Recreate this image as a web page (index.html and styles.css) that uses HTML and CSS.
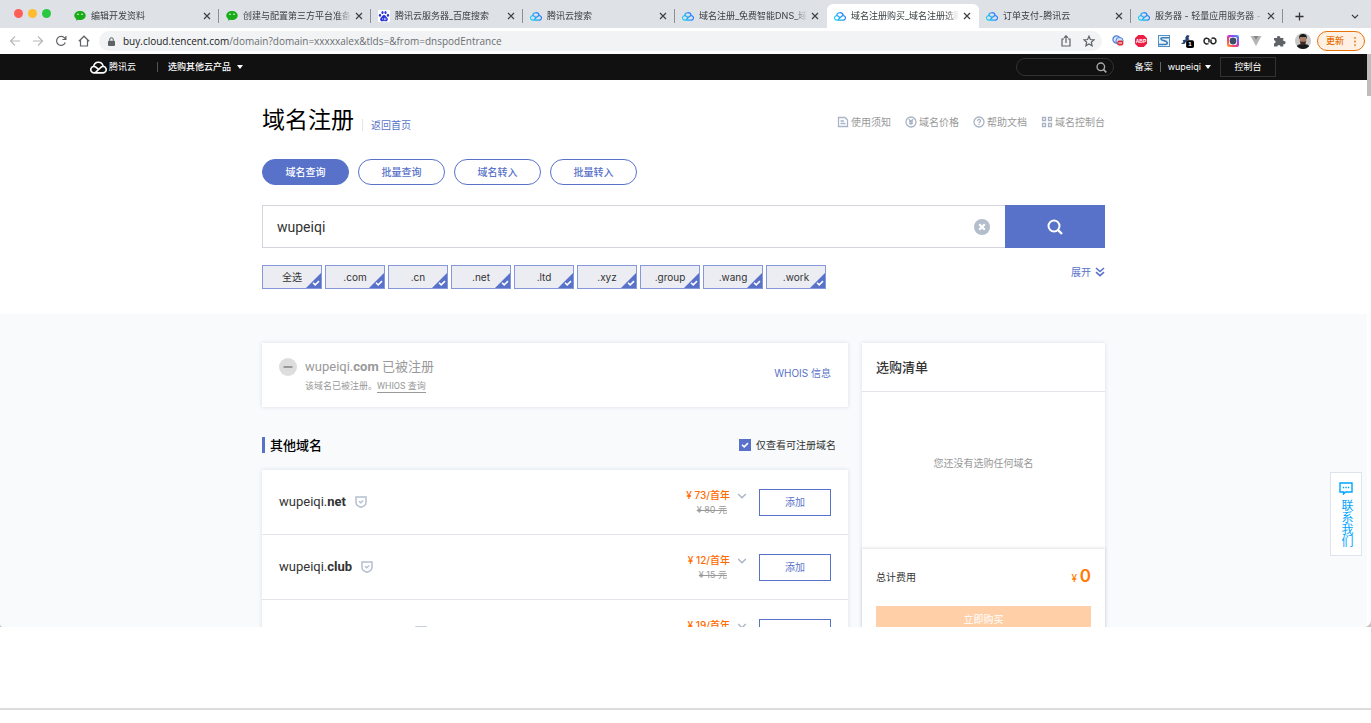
FILE: index.html
```html
<!DOCTYPE html>
<html lang="zh-CN">
<head>
<meta charset="utf-8">
<title>域名注册购买</title>
<link rel="stylesheet" href="styles.css">
</head>
<body>
<svg class="defs" aria-hidden="true">
  <defs>
    <linearGradient id="sky" gradientUnits="userSpaceOnUse" x1="1" y1="11" x2="14" y2="2"><stop offset="0" stop-color="#16d8ec"/><stop offset=".5" stop-color="#1f9bff"/><stop offset="1" stop-color="#1a6dff"/></linearGradient>
  </defs>
  <symbol id="cloud" viewBox="0 0 16 13"><path d="M3.800 12H12.200a3 3 0 1 0-2-5.200L5.600 11.200Q4.800 12 3.800 12A3 3 0 1 1 5.800 6.800L8 8.800M3.500 5.800A4.500 4.500 0 0 1 12.300 5.500" fill="none" stroke-width="1.500"/></symbol>
  <symbol id="wechat" viewBox="0 0 12 12"><path d="M6 1C2.800 1 .3 3 .3 5.500c0 1.500.8 2.700 2 3.500L2 10.700l2-1c.6.200 1.300.3 2 .3 3.200 0 5.700-2 5.700-4.500S9.200 1 6 1z" fill="#1aad19"/><g fill="#fff"><circle cx="4" cy="4.300" r=".8"/><circle cx="8" cy="4.300" r=".8"/></g></symbol>
  <symbol id="shield" viewBox="0 0 12 12"><path d="M1 1h10v5.500c0 2.500-2 3.900-5 4.700C3 10.400 1 9 1 6.500z" fill="none" stroke="#b4bfd0" stroke-width="1.500"/><path d="M4 5.300l1.600 1.500L8.200 4.400" fill="none" stroke="#b4bfd0" stroke-width="1.400"/></symbol>
  <symbol id="chevron" viewBox="0 0 10 6"><path d="M1.200 1l3.800 3.800L8.800 1" fill="none" stroke="currentColor" stroke-width="1.400"/></symbol>
  <symbol id="cross" viewBox="0 0 8 8"><path d="M1 1l6 6M7 1l-6 6" stroke="currentColor" stroke-width="1.200"/></symbol>
  <symbol id="lens" viewBox="0 0 16 16"><circle cx="7" cy="7" r="5.500" fill="none" stroke="currentColor" stroke-width="2"/><path d="M11 11l4 4" stroke="currentColor" stroke-width="2.400"/></symbol>
  <symbol id="tick" viewBox="0 0 8 6"><path d="M1 2.800L3.200 4.900 7 1.100" fill="none" stroke="#fff" stroke-width="1.500"/></symbol>
</svg>

<div class="browser">
  <div class="tabstrip">
    <div class="lights"><i class="light red"></i><i class="light amber"></i><i class="light green"></i></div>
    <div class="tab"><svg class="fav"><use href="#wechat"/></svg><span class="tab-title">编辑开发资料</span><button class="close" aria-label="关闭"><svg><use href="#cross"/></svg></button></div>
    <div class="tab"><svg class="fav"><use href="#wechat"/></svg><span class="tab-title">创建与配置第三方平台准备工</span><button class="close" aria-label="关闭"><svg><use href="#cross"/></svg></button></div>
    <div class="tab"><svg class="fav" viewBox="0 0 12 12"><rect width="12" height="12" rx="1" fill="#fff"/><g fill="#2932e1"><ellipse cx="2" cy="5.300" rx="1.100" ry="1.500"/><ellipse cx="4.500" cy="2.500" rx="1.100" ry="1.500"/><ellipse cx="7.500" cy="2.500" rx="1.100" ry="1.500"/><ellipse cx="10" cy="5.300" rx="1.100" ry="1.500"/><path d="M6 5c-1.500 0-1.700 1.400-2.700 2.200-1.700 1.400-1.500 4 .7 4 1 0 1.200-.3 2-.3s1 .3 2 .3c2.200 0 2.400-2.600.7-4C7.700 6.400 7.500 5 6 5z"/></g><path d="M4.700 8v1.800M6.500 7.800v2h1.300v-2" stroke="#fff" stroke-width=".6" fill="none"/></svg><span class="tab-title">腾讯云服务器_百度搜索</span><button class="close" aria-label="关闭"><svg><use href="#cross"/></svg></button></div>
    <div class="tab"><svg class="fav sky"><use href="#cloud"/></svg><span class="tab-title">腾讯云搜索</span><button class="close" aria-label="关闭"><svg><use href="#cross"/></svg></button></div>
    <div class="tab bare"><svg class="fav sky"><use href="#cloud"/></svg><span class="tab-title">域名注册_免费智能DNS_域</span><button class="close" aria-label="关闭"><svg><use href="#cross"/></svg></button></div>
    <div class="tab active bare"><svg class="fav sky"><use href="#cloud"/></svg><span class="tab-title">域名注册购买_域名注册选购</span><button class="close" aria-label="关闭"><svg><use href="#cross"/></svg></button></div>
    <div class="tab"><svg class="fav sky"><use href="#cloud"/></svg><span class="tab-title">订单支付-腾讯云</span><button class="close" aria-label="关闭"><svg><use href="#cross"/></svg></button></div>
    <div class="tab"><svg class="fav sky"><use href="#cloud"/></svg><span class="tab-title">服务器 - 轻量应用服务器 - 控</span><button class="close" aria-label="关闭"><svg><use href="#cross"/></svg></button></div>
    <button class="newtab" aria-label="新标签页"><svg viewBox="0 0 10 10"><path d="M5 .5v9M.5 5h9" stroke="#333" stroke-width="1.400"/></svg></button>
    <button class="tabmenu" aria-label="搜索标签页"><svg><use href="#chevron"/></svg></button>
  </div>

  <div class="toolbar">
    <div class="nav-icons">
      <svg viewBox="0 0 12 12" class="dim"><path d="M11 6H1.500M6 1.500L1.500 6 6 10.500"/></svg>
      <svg viewBox="0 0 12 12" class="dim"><path d="M1 6h9.500M6 1.500L10.500 6 6 10.500"/></svg>
      <svg viewBox="0 0 12 12"><path d="M10.300 7.500A4.500 4.500 0 1 1 9.600 3L10.800 4.200M10.900 1v3.500H7.400"/></svg>
      <svg viewBox="0 0 12 12"><path d="M.8 6.200L6 1.200l5.200 5M2.500 5v6h7V5"/></svg>
    </div>
    <div class="address">
      <svg class="lock" viewBox="0 0 8 10"><rect y="4" width="8" height="6" rx="1" fill="#5f6368"/><path d="M2 4V2.800a2 2 0 0 1 4 0V4" fill="none" stroke="#5f6368" stroke-width="1.200"/></svg>
      <span class="url"><b>buy.cloud.tencent.com</b>/domain?domain=xxxxxalex&amp;tlds=&amp;from=dnspodEntrance</span>
      <svg class="addr-icon" viewBox="0 0 12 12"><path d="M4 4H2v7h8V4H8M6 8V1M4 2.800L6 .8l2 2"/></svg>
      <svg class="addr-icon" viewBox="0 0 12 12"><path d="M6 1.200l1.400 3.300 3.600.3-2.700 2.400.8 3.500L6 8.900l-3.100 1.800.8-3.500L1 4.800l3.600-.3z"/></svg>
    </div>
    <div class="exts">
      <svg viewBox="0 0 14 14"><circle cx="5.500" cy="5.500" r="3.600" fill="#dbe7fb" stroke="#4a7ddb" stroke-width="1.200"/><circle cx="8.500" cy="7" r="3.600" fill="#cfe0fa" stroke="#4a7ddb"/><rect x="6.300" y="6.500" width="6" height="5" rx="2" fill="#e5262b"/><path d="M7.500 9h3.600" stroke="#fff"/></svg>
      <svg viewBox="0 0 14 14"><path d="M4.300 1h5.400L13 4.300v5.400L9.700 13H4.300L1 9.700V4.300z" fill="#ed1e45"/><text x="7" y="9" class="abp">ABP</text></svg>
      <svg viewBox="0 0 14 14"><rect x="1.500" y="1.500" width="11" height="11" fill="#eaf3fb" stroke="#5590c4"/><path d="M12 3.800H5.500Q3.800 3.800 4 5.100 4.200 6.200 7 6.600T10.300 8.800Q10.300 10.500 8 10.500H2" fill="none" stroke="#3f7fb8" stroke-width="1.600"/></svg>
      <svg viewBox="0 0 16 16"><path d="M8 1l3 1-1.500 2.500L11 6 8 7.500 5 11.500 1 11l3-2-1-1.800 3.500-1L6 4z" fill="#25406f"/><rect x="7" y="7" width="9" height="9" rx="2" fill="#000"/><text x="11.500" y="14" class="badge">1</text></svg>
      <svg viewBox="0 0 14 14"><path d="M8.500 4.500C10 3.500 13 4 13 7s-3.500 3.600-5 1.500V5.500M5.500 9.500C4 10.500 1 10 1 7s3.500-3.600 5-1.500v3" fill="none" stroke="#222" stroke-width="1.500"/></svg>
      <svg viewBox="0 0 14 14"><defs><linearGradient id="cam" x1="0" y1="1" x2="1" y2="0"><stop offset="0" stop-color="#ffb02f"/><stop offset=".3" stop-color="#ff4b5b"/><stop offset=".65" stop-color="#a13cf0"/><stop offset="1" stop-color="#2fa8ff"/></linearGradient></defs><rect x="1" y="1" width="12" height="12" rx="2" fill="url(#cam)"/><rect x="3" y="3" width="8" height="8" rx="2" fill="#fff"/><circle cx="7" cy="7" r="3.400" fill="#3c5063"/></svg>
      <svg viewBox="0 0 14 14"><path d="M1.500 2h3.300L7 6l2.200-4h3.300L7 12z" fill="#b5b5b5"/><path d="M4.500 2L7 6.200 9.500 2z" fill="#858585"/></svg>
      <svg viewBox="0 0 14 14"><path d="M2 4h3a1.700 1.700 0 1 1 3.300 0h3v3a1.700 1.700 0 1 1 0 3.200v2.300H8.500a1.600 1.600 0 0 0-3.200 0H2V9.400a1.600 1.600 0 0 0 0-3.200z" fill="#5f6368"/></svg>
      <svg class="avatar" viewBox="0 0 16 16"><clipPath id="round"><circle cx="8" cy="8" r="8"/></clipPath><g clip-path="url(#round)"><rect width="16" height="16" fill="#c9c8c6"/><path d="M1 16c0-4 3-5 7-5s7 1 7 5z" fill="#17191d"/><ellipse cx="8" cy="6.800" rx="3.300" ry="4.500" fill="#a97c66"/><path d="M4 6.500C3.500 2 6 1 8 1s4.500 1 4 5.500L11 4H5z" fill="#1b1a1a"/><path d="M5 8.300q3 1 6 0L10.400 11 8 12.300 5.600 11z" fill="#3a2b27"/></g></svg>
      <button class="update">更新<svg viewBox="0 0 2 10"><g fill="#e8710a"><circle cx="1" cy="1" r="1"/><circle cx="1" cy="5" r="1"/><circle cx="1" cy="9" r="1"/></g></svg></button>
    </div>
  </div>

  <div class="viewport">
    <div class="page">
      <nav class="topnav">
        <a class="logo" href="#"><svg><use href="#cloud"/></svg>腾讯云</a>
        <i class="rule"></i>
        <a class="products" href="#">选购其他云产品<i class="caret"></i></a>
        <div class="navsearch"><input type="text" aria-label="搜索"><svg><use href="#lens"/></svg></div>
        <a class="beian" href="#">备案</a>
        <a class="user" href="#">wupeiqi<i class="caret"></i></a>
        <a class="console" href="#">控制台</a>
      </nav>

      <section class="hero">
        <div class="wrap">
          <div class="title-row">
            <h1>域名注册</h1>
            <a class="back" href="#">返回首页</a>
            <div class="quick">
              <a href="#"><svg viewBox="0 0 12 12"><path d="M1.500 1.500h6.500l2.500 2.500v6.500h-9zM3.500 5h3.500M3.500 7.500h5"/></svg>使用须知</a>
              <a href="#"><svg viewBox="0 0 12 12"><circle cx="6" cy="6" r="5"/><path d="M4 3.300l2 2.200 2-2.200M6 5.500V9M4 5.700h4M4 7.400h4"/></svg>域名价格</a>
              <a href="#"><svg viewBox="0 0 12 12"><circle cx="6" cy="6" r="5"/><path d="M4.500 5a1.500 1.500 0 1 1 2.300 1.200Q6 6.600 6 7.200M6 8v1"/></svg>帮助文档</a>
              <a href="#"><svg viewBox="0 0 12 12"><path d="M1.500 1.500h3v3h-3zM7.500 1.500h3v3h-3zM1.500 7.500h3v3h-3zM7.500 7.500h3v3h-3z"/></svg>域名控制台</a>
            </div>
          </div>

          <div class="pills">
            <button class="pill on">域名查询</button><button class="pill">批量查询</button><button class="pill">域名转入</button><button class="pill">批量转入</button>
          </div>

          <form class="search">
            <input type="text" value="wupeiqi" aria-label="域名">
            <button type="button" class="clear" aria-label="清除"><svg viewBox="0 0 16 16"><circle cx="8" cy="8" r="8" fill="#b4bdcc"/><path d="M5.200 5.200l5.600 5.600M10.800 5.200l-5.600 5.600" stroke="#fff" stroke-width="2.200"/></svg></button>
            <button type="button" class="go" aria-label="查询"><svg><use href="#lens"/></svg></button>
          </form>

          <div class="suffix-row">
            <div class="chips">
              <label class="chip"><input type="checkbox" checked>全选<svg class="tick"><use href="#tick"/></svg></label>
              <label class="chip"><input type="checkbox" checked>.com<svg class="tick"><use href="#tick"/></svg></label>
              <label class="chip"><input type="checkbox" checked>.cn<svg class="tick"><use href="#tick"/></svg></label>
              <label class="chip"><input type="checkbox" checked>.net<svg class="tick"><use href="#tick"/></svg></label>
              <label class="chip"><input type="checkbox" checked>.ltd<svg class="tick"><use href="#tick"/></svg></label>
              <label class="chip"><input type="checkbox" checked>.xyz<svg class="tick"><use href="#tick"/></svg></label>
              <label class="chip"><input type="checkbox" checked>.group<svg class="tick"><use href="#tick"/></svg></label>
              <label class="chip"><input type="checkbox" checked>.wang<svg class="tick"><use href="#tick"/></svg></label>
              <label class="chip"><input type="checkbox" checked>.work<svg class="tick"><use href="#tick"/></svg></label>
            </div>
            <a class="expand" href="#">展开<svg viewBox="0 0 10 10"><path d="M1 1l4 3.500L9 1M1 5.200l4 3.500 4-3.500" fill="none" stroke="currentColor" stroke-width="1.600"/></svg></a>
          </div>
        </div>
      </section>

      <section class="results">
        <div class="wrap columns">
          <main class="left">
            <div class="card taken">
              <svg class="minus" viewBox="0 0 18 18"><circle cx="9" cy="9" r="9" fill="#ddd"/><path d="M4.500 9h9" stroke="#999" stroke-width="2"/></svg>
              <div class="taken-text">
                <div class="name">wupeiqi.<b>com</b> 已被注册</div>
                <div class="note">该域名已被注册。<a href="#">WHIOS 查询</a></div>
              </div>
              <a class="whois" href="#">WHOIS 信息</a>
            </div>

            <div class="list-head">
              <h2>其他域名</h2>
              <label class="only"><span class="box"><input type="checkbox" checked><svg class="tick"><use href="#tick"/></svg></span>仅查看可注册域名</label>
            </div>

            <div class="card list">
              <div class="row">
                <div class="name">wupeiqi.<b>net</b></div><svg class="shield"><use href="#shield"/></svg>
                <div class="price"><strong>¥ 73/首年</strong><del>¥ 80 元</del></div><svg class="more"><use href="#chevron"/></svg>
                <button class="add">添加</button>
              </div>
              <div class="row">
                <div class="name">wupeiqi.<b>club</b></div><svg class="shield"><use href="#shield"/></svg>
                <div class="price"><strong>¥ 12/首年</strong><del>¥ 15 元</del></div><svg class="more"><use href="#chevron"/></svg>
                <button class="add">添加</button>
              </div>
              <div class="row">
                <div class="name long"></div><svg class="shield"><use href="#shield"/></svg>
                <div class="price"><strong>¥ 19/首年</strong><del></del></div><svg class="more"><use href="#chevron"/></svg>
                <button class="add">添加</button>
              </div>
            </div>
          </main>

          <aside class="card cart">
            <h2>选购清单</h2>
            <p class="empty">您还没有选购任何域名</p>
            <div class="total">
              <div class="total-row"><span>总计费用</span><span class="sum">¥ <b>0</b></span></div>
              <button class="buy">立即购买</button>
            </div>
          </aside>
        </div>
      </section>
    </div>
    <div class="scrollbar"><i class="thumb"></i></div>
    <a class="contact" href="#"><svg viewBox="0 0 14 13"><path d="M1 1h12v9H6.500L4.500 12V10H1z" fill="none" stroke="currentColor" stroke-width="1.400"/><path d="M3.800 5.500h1.400M6.300 5.500h1.400M8.800 5.500h1.400" stroke="currentColor" stroke-width="1.400"/></svg><span>联系我们</span></a>
  </div>
</div>
<footer class="below"><hr></footer>
</body>
</html>
```
FILE: styles.css
```css
* { box-sizing: border-box; }
body {
  margin: 0;
  height: 100vh;
  display: flex;
  flex-direction: column;
  background: #fff;
  color: #333;
  font: 10px/14px Inter, "Noto Sans CJK SC", sans-serif;
}
h1, h2, p { margin: 0; }
a { color: inherit; text-decoration: none; }
button { font: inherit; color: inherit; border: 0; background: none; padding: 0; }
input { font: inherit; color: inherit; margin: 0; }
svg { flex: none; }
.defs { position: absolute; width: 0; height: 0; }

/* browser frame */
.browser { flex: 1; min-height: 0; display: flex; flex-direction: column; background: #c4c4c4; }
.tabstrip { display: flex; align-items: stretch; height: 28px; padding: 4px 12px 0 0; background: #dee1e6; }
.lights { flex: none; display: flex; gap: 5px; width: 67px; padding: 5px 0 0 14px; }
.light { width: 9px; height: 9px; border-radius: 50%; }
.red { background: #ff5f57; }
.amber { background: #febc2e; }
.green { background: #28c840; }
.tab {
  flex: 0 1 152px;
  min-width: 0;
  display: flex;
  align-items: center;
  padding: 0 8px 0 7px;
  position: relative;
  font-size: 9px;
  color: #3c4043;
}
.tab::after { content: ""; position: absolute; right: 0; top: 5px; height: 14px; border-right: 1px solid #8b8e93; }
.tab.active::after, .tab.bare::after { display: none; }
.tab.active { background: #fff; border-radius: 6px 6px 0 0; }
.fav { width: 12px; height: 12px; margin-right: 5px; }
.fav.sky { stroke: url(#sky); }
.tab-title {
  flex: 1;
  overflow: hidden;
  white-space: nowrap;
  -webkit-mask-image: linear-gradient(to right, #000 88%, transparent);
  mask-image: linear-gradient(to right, #000 88%, transparent);
}
.close { width: 8px; height: 8px; margin-left: 4px; display: flex; }
.close svg { width: 8px; height: 8px; }
.newtab { width: 32px; display: flex; align-items: center; justify-content: center; }
.newtab svg { width: 9px; height: 9px; }
.tabmenu { margin-left: auto; display: flex; align-items: center; }
.tabmenu svg { width: 8px; height: 5px; }

.toolbar { display: flex; align-items: center; height: 26px; padding: 0 6px 0 9px; background: #fff; }
.nav-icons { display: flex; gap: 11px; width: 90px; }
.nav-icons svg, .addr-icon { width: 12px; height: 12px; fill: none; stroke: #5f6368; stroke-width: 1.2; }
.nav-icons .dim { stroke: #b5b7ba; }
.address {
  flex: 1;
  display: flex;
  align-items: center;
  gap: 11px;
  height: 20px;
  padding: 0 7px 0 9px;
  border-radius: 10px;
  background: #f1f3f4;
}
.lock { width: 7px; height: 9px; }
.url { flex: 1; margin-left: -3px; font-family: "Open Sans", sans-serif; font-size: 10px; color: #6b6f73; white-space: nowrap; }
.url b { font-weight: 400; color: #202124; }
.exts { display: flex; align-items: center; gap: 9px; padding-left: 9px; }
.exts svg { width: 14px; height: 14px; }
.exts .avatar { width: 16px; height: 16px; }
.abp { fill: #fff; font: bold 5px "Liberation Sans", sans-serif; text-anchor: middle; }
.badge { fill: #fff; font: bold 7px "Liberation Sans", sans-serif; text-anchor: middle; }
.update {
  display: flex;
  align-items: center;
  gap: 10px;
  height: 20px;
  margin-left: -3px;
  padding: 0 8px;
  border: 1px solid #e8710a;
  border-radius: 10px;
  background: #fef1e4;
  color: #e8710a;
  font-size: 9px;
  font-weight: 500;
}
.exts .update svg { width: 2px; height: 9px; }

.viewport { flex: 1; min-height: 0; display: flex; position: relative; overflow: hidden; background: #fff; border-radius: 0 0 7px 4px; }
.page { flex: 1; min-width: 0; }
.scrollbar { width: 4px; }
.thumb { display: block; height: 42px; background: #bdbdbd; }

/* site navigation */
.topnav { display: flex; align-items: center; height: 26px; padding: 0 91px 0 90px; background: #111; color: #fff; font-size: 9px; }
.topnav a { display: flex; align-items: center; }
.logo { gap: 2px; }
.logo svg { width: 17px; height: 14px; stroke: #fff; }
.rule { height: 10px; margin: 0 10px 0 21px; border-left: 1px solid #555; }
.topnav .products { font-weight: 500; }
.caret { margin-left: 6px; border: 3px solid transparent; border-top: 4px solid #fff; border-bottom: 0; }
.navsearch { display: flex; align-items: center; width: 98px; height: 18px; margin-left: auto; padding: 0 6px; border: 1px solid #333; border-radius: 9px; }
.navsearch input { flex: 1; min-width: 0; border: 0; background: none; }
.navsearch svg { width: 11px; height: 11px; color: #aaa; }
.topnav .beian { margin-left: 21px; padding-right: 7px; line-height: 10px; border-right: 1px solid #666; }
.topnav .user { margin-left: 7px; }
.user .caret { margin-left: 4px; }
.topnav .console { justify-content: center; width: 56px; height: 20px; margin-left: 9px; border: 1px solid #333; }

/* search area */
.wrap { width: 843px; max-width: 100%; margin: 0 auto; }
.hero { padding: 24px 0 25px; }
.title-row { display: flex; align-items: center; height: 32px; }
h1 { font-size: 23px; line-height: 32px; font-weight: 400; color: #000; }
.back { margin: 9px 0 0 8px; padding-left: 8px; line-height: 12px; border-left: 1px solid #e5e5e5; color: #5872c9; }
.quick { display: flex; gap: 14px; margin: 4px 0 0 auto; color: #999; }
.quick a { display: flex; align-items: center; gap: 2px; }
.quick svg { width: 12px; height: 12px; fill: none; stroke: #a9b3c4; stroke-width: 1.3; }
.pills { display: flex; gap: 9px; margin-top: 23px; }
.pill { width: 87px; height: 26px; border: 1px solid #5872c9; border-radius: 13px; color: #5872c9; font-weight: 500; }
.pill.on { background: #5872c9; color: #fff; }
.search { display: flex; align-items: center; height: 43px; margin-top: 20px; border: 1px solid #d3d5dd; border-right: 0; }
.search input { flex: 1; height: 41px; padding: 0 14px; border: 0; outline: 0; font-family: Roboto, "Noto Sans CJK SC", sans-serif; font-size: 14px; }
.clear { display: flex; margin-right: 15px; }
.clear svg { width: 16px; height: 16px; }
.go { display: flex; align-items: center; justify-content: center; width: 100px; height: 43px; background: #5872c9; color: #fff; }
.go svg { width: 16px; height: 16px; }
.suffix-row { display: flex; justify-content: space-between; margin-top: 17px; }
.chips { display: flex; gap: 3px; }
.chip {
  position: relative;
  width: 60px;
  height: 24px;
  line-height: 22px;
  border: 1px solid #8498da;
  background: #ecedf3;
  text-align: center;
}
.chip input {
  appearance: none;
  position: absolute;
  right: 0;
  bottom: 0;
  width: 15px;
  height: 15px;
  background: #5872c9;
  clip-path: polygon(100% 0, 100% 100%, 0 100%);
}
.tick { position: absolute; right: 1px; bottom: 2px; width: 8px; height: 6px; pointer-events: none; }
.expand { display: flex; align-items: center; gap: 4px; height: 14px; color: #5872c9; }
.expand svg { width: 10px; height: 10px; }

/* results */
.results { padding: 29px 0; background: #f8fafc; }
.columns { display: flex; align-items: flex-start; gap: 14px; }
.left { flex: 1; }
.card { background: #fff; box-shadow: 0 0 4px rgba(50, 70, 120, .16); }
.taken { display: flex; height: 64px; padding: 15px 17px; color: #999; }
.minus { width: 18px; height: 18px; }
.taken-text { flex: 1; margin-left: 8px; }
.name { font-family: Roboto, "Noto Sans CJK SC", sans-serif; font-size: 13px; line-height: 18px; }
.name b { font-weight: 700; }
.note { margin-top: 4px; font-family: Roboto, "Noto Sans CJK SC", sans-serif; font-size: 9px; line-height: 13px; }
.note a { display: inline-block; border-bottom: 1px solid #999; line-height: 11px; }
.whois { padding-top: 8px; color: #5872c9; }
.list-head { display: flex; align-items: center; justify-content: space-between; height: 63px; padding: 13px 12px 0 0; }
.list-head h2 { padding-left: 5px; border-left: 3px solid #5872c9; font-size: 13px; line-height: 16px; font-weight: 500; color: #000; }
.only { display: flex; align-items: center; gap: 5px; }
.box { position: relative; display: flex; }
.box input { appearance: none; width: 12px; height: 12px; background: #5872c9; }
.box .tick { right: 2px; bottom: 3px; }
.row { display: flex; align-items: center; height: 65px; padding: 0 17px; border-bottom: 1px solid #e3e5ea; }
.long { min-width: 127px; }
.shield { width: 12px; height: 12px; margin-left: 9px; }
.price { display: flex; flex-direction: column; margin-left: auto; text-align: right; }
.price strong { color: #ff6a00; font-weight: 500; line-height: 15px; }
.price del { min-height: 14px; padding-right: 3px; font-size: 9px; color: #999; }
.more { width: 10px; height: 6px; margin: 0 12px 12px 7px; color: #a9b5c6; }
.add { width: 72px; height: 27px; border: 1px solid #5872c9; color: #5872c9; background: #fff; }
.cart { width: 243px; }
.cart h2 { padding: 15px 14px; border-bottom: 1px solid #e3e5ea; font-size: 13px; line-height: 18px; font-weight: 500; }
.empty { padding: 64px 0 78px; text-align: center; line-height: 15px; color: #999; }
.total { padding: 16px 14px; box-shadow: 0 -1px 3px rgba(0, 0, 0, .12); }
.total-row { display: flex; align-items: center; justify-content: space-between; height: 24px; }
.sum { color: #ff7a00; font-size: 10px; font-weight: 500; }
.sum b { font-size: 17px; font-weight: 600; }
.buy { width: 100%; height: 26px; margin-top: 17px; background: #ffcfa8; color: #fff; }

.contact {
  position: absolute;
  right: 9px;
  bottom: 71px;
  display: flex;
  flex-direction: column;
  align-items: center;
  gap: 4px;
  width: 32px;
  height: 84px;
  padding-top: 9px;
  border: 1px solid #dfe4ec;
  background: #fff;
  color: #00a4ff;
}
.contact svg { width: 14px; height: 13px; }
.contact span { writing-mode: vertical-rl; font-size: 12px; line-height: 14px; }

.below { height: 96px; padding-top: 81px; }
.below hr { margin: 0; height: 2px; border: 0; background: #dcdcdc; }
```
